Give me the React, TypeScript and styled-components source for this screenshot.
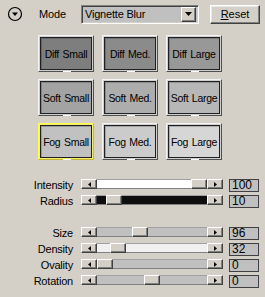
import React from "react";
import styled, { createGlobalStyle, css } from "styled-components";

const Global = createGlobalStyle`
  html, body { margin: 0; padding: 0; background: #d4d0c8; }
  body { font-family: "Liberation Sans", Arial, sans-serif; font-size: 11px; color: #000; }
  * { box-sizing: border-box; }
`;

const Panel = styled.div`
  width: 265px;
  height: 297px;
  background: #d4d0c8;
  display: flex;
  flex-direction: column;
  overflow: hidden;
`;

const Header = styled.div`
  display: flex;
  align-items: center;
  height: 20px;
  margin-top: 4px;
  padding-left: 7px;
`;

const ModeLabel = styled.span`
  margin-left: 16px;
  width: 42px;
  font-size: 11px;
  letter-spacing: -0.1px;
`;

const Combo = styled.div`
  width: 118px;
  height: 19px;
  display: flex;
  align-items: center;
  background: #c0c0c0;
  border: 1px solid;
  border-color: #808080 #ffffff #ffffff #808080;
  box-shadow: inset 1px 1px #404040, inset -1px -1px #d4d0c8;
  padding: 0 2px 0 3px;
`;

const ComboText = styled.span`
  flex: 1;
  font-size: 11px;
  letter-spacing: -0.2px;
`;

const DropBtn = styled.div`
  width: 15px;
  height: 15px;
  background: #d4d0c8;
  border: 1px solid;
  border-color: #ffffff #404040 #404040 #ffffff;
  box-shadow: inset -1px -1px #808080;
  display: flex;
  align-items: center;
  justify-content: center;
`;

const ResetBtn = styled.div`
  margin-left: 11px;
  width: 50px;
  height: 19px;
  background: #d4d0c8;
  border: 1px solid;
  border-color: #ffffff #404040 #404040 #ffffff;
  box-shadow: inset -1px -1px #808080, inset 1px 1px #e8e8e8;
  display: flex;
  align-items: center;
  justify-content: center;
  font-size: 11px;
  u { text-decoration: underline; }
`;

const Grid = styled.div`
  display: grid;
  grid-template-columns: repeat(3, 56px);
  grid-auto-rows: 37px;
  column-gap: 8px;
  row-gap: 7px;
  margin-top: 11px;
  margin-left: 38px;
`;

const Preset = styled.div<{ $selected?: boolean }>`
  position: relative;
  border: 1px solid;
  border-color: #f4f4f4 #505050 #505050 #f4f4f4;
  padding: 1px;
  background: #cfcfcf;
  display: flex;
  ${(p) =>
    p.$selected &&
    css`
      border-color: #ffff50 #c8b830 #c8b830 #ffff50;
      background: #f6f070;
    `}
  &::after {
    content: "";
    position: absolute;
    left: 24px;
    bottom: -1px;
    width: 8px;
    height: 1px;
    background: #ffffff;
  }
`;

const Face = styled.div<{ $bg: string }>`
  flex: 1;
  background: ${(p) => p.$bg};
  border: 1px solid #202020;
  box-shadow: inset 1px 1px rgba(0, 0, 0, 0.2);
  display: flex;
  align-items: center;
  justify-content: center;
  font-size: 10.5px;
  white-space: nowrap;
  letter-spacing: -0.3px;
  word-spacing: 1px;
`;

const Sliders = styled.div<{ $top: number }>`
  display: flex;
  flex-direction: column;
  gap: 3px;
  margin-top: ${(p) => p.$top}px;
`;

const Row = styled.div`
  display: flex;
  align-items: center;
  height: 13px;
`;

const Label = styled.span`
  width: 73px;
  text-align: right;
  font-size: 11px;
  letter-spacing: -0.2px;
  line-height: 13px;
`;

const Scroll = styled.div`
  margin-left: 8px;
  width: 142px;
  height: 10px;
  display: flex;
  align-self: flex-start;
`;

const Arrow = styled.div`
  width: 16px;
  height: 10px;
  background: #d4d0c8;
  border: 1px solid;
  border-color: #ffffff #404040 #404040 #ffffff;
  box-shadow: inset -1px -1px #808080;
  display: flex;
  align-items: center;
  justify-content: center;
`;

const Track = styled.div<{ $bg: string }>`
  position: relative;
  flex: 1;
  background: ${(p) => p.$bg};
  border-top: 1px solid #a0a0a0;
  border-bottom: 1px solid #808080;
`;

const Thumb = styled.div`
  position: absolute;
  top: -1px;
  width: 16px;
  height: 10px;
  background: #d4d0c8;
  border: 1px solid;
  border-color: #ffffff #404040 #404040 #ffffff;
  box-shadow: inset -1px -1px #808080;
`;

const ValueBox = styled.div`
  margin-left: 6px;
  width: 30px;
  height: 13px;
  background: #c0c0c0;
  border: 1px solid #404040;
  font-size: 12px;
  line-height: 11px;
  padding-left: 2px;
`;

const Circle = () => (
  <svg width="16" height="16" viewBox="0 0 16 16">
    <circle cx="8" cy="8" r="6.5" fill="#d4d0c8" stroke="#000" strokeWidth="1.2" />
    <path d="M5 6.5 L11 6.5 L8 10 Z" fill="#000" />
  </svg>
);

const Tri = ({ dir }: { dir: "l" | "r" | "d" }) => {
  if (dir === "d")
    return (
      <svg width="7" height="4" viewBox="0 0 7 4">
        <path d="M0 0 H7 L3.5 4 Z" fill="#000" />
      </svg>
    );
  return (
    <svg width="3" height="5" viewBox="0 0 3 5">
      <path d={dir === "l" ? "M3 0 V5 L0 2.5 Z" : "M0 0 V5 L3 2.5 Z"} fill="#000" />
    </svg>
  );
};

const presets = [
  ["Diff Small", "#7e7e7e"],
  ["Diff Med.", "#8b8b8b"],
  ["Diff Large", "#989898"],
  ["Soft Small", "#a3a3a3"],
  ["Soft Med.", "#adadad"],
  ["Soft Large", "#b7b7b7"],
  ["Fog Small", "#c1c1c1"],
  ["Fog Med.", "#cbcbcb"],
  ["Fog Large", "#d6d6d6"],
];

type S = { label: string; value: string; pos: number; track: string };
const group1: S[] = [
  { label: "Intensity", value: "100", pos: 94, track: "#ffffff" },
  { label: "Radius", value: "10", pos: 9, track: "#0e0e0e" },
];
const group2: S[] = [
  { label: "Size", value: "96", pos: 35, track: "#c0c0c0" },
  { label: "Density", value: "32", pos: 13, track: "#f0f0f0" },
  { label: "Ovality", value: "0", pos: 0, track: "#c0c0c0" },
  { label: "Rotation", value: "0", pos: 47, track: "#c0c0c0" },
];

const SliderRow = ({ s }: { s: S }) => (
  <Row>
    <Label>{s.label}</Label>
    <Scroll>
      <Arrow><Tri dir="l" /></Arrow>
      <Track $bg={s.track}>
        <Thumb style={{ left: s.pos }} />
      </Track>
      <Arrow><Tri dir="r" /></Arrow>
    </Scroll>
    <ValueBox>{s.value}</ValueBox>
  </Row>
);

export default function App() {
  return (
    <Panel>
      <Global />
      <Header>
        <Circle />
        <ModeLabel>Mode</ModeLabel>
        <Combo>
          <ComboText>Vignette Blur</ComboText>
          <DropBtn><Tri dir="d" /></DropBtn>
        </Combo>
        <ResetBtn><span><u>R</u>eset</span></ResetBtn>
      </Header>
      <Grid>
        {presets.map(([name, bg]) => (
          <Preset key={name} $selected={name === "Fog Small"}>
            <Face $bg={bg}>{name}</Face>
          </Preset>
        ))}
      </Grid>
      <Sliders $top={19}>
        {group1.map((s) => <SliderRow key={s.label} s={s} />)}
      </Sliders>
      <Sliders $top={19}>
        {group2.map((s) => <SliderRow key={s.label} s={s} />)}
      </Sliders>
    </Panel>
  );
}
